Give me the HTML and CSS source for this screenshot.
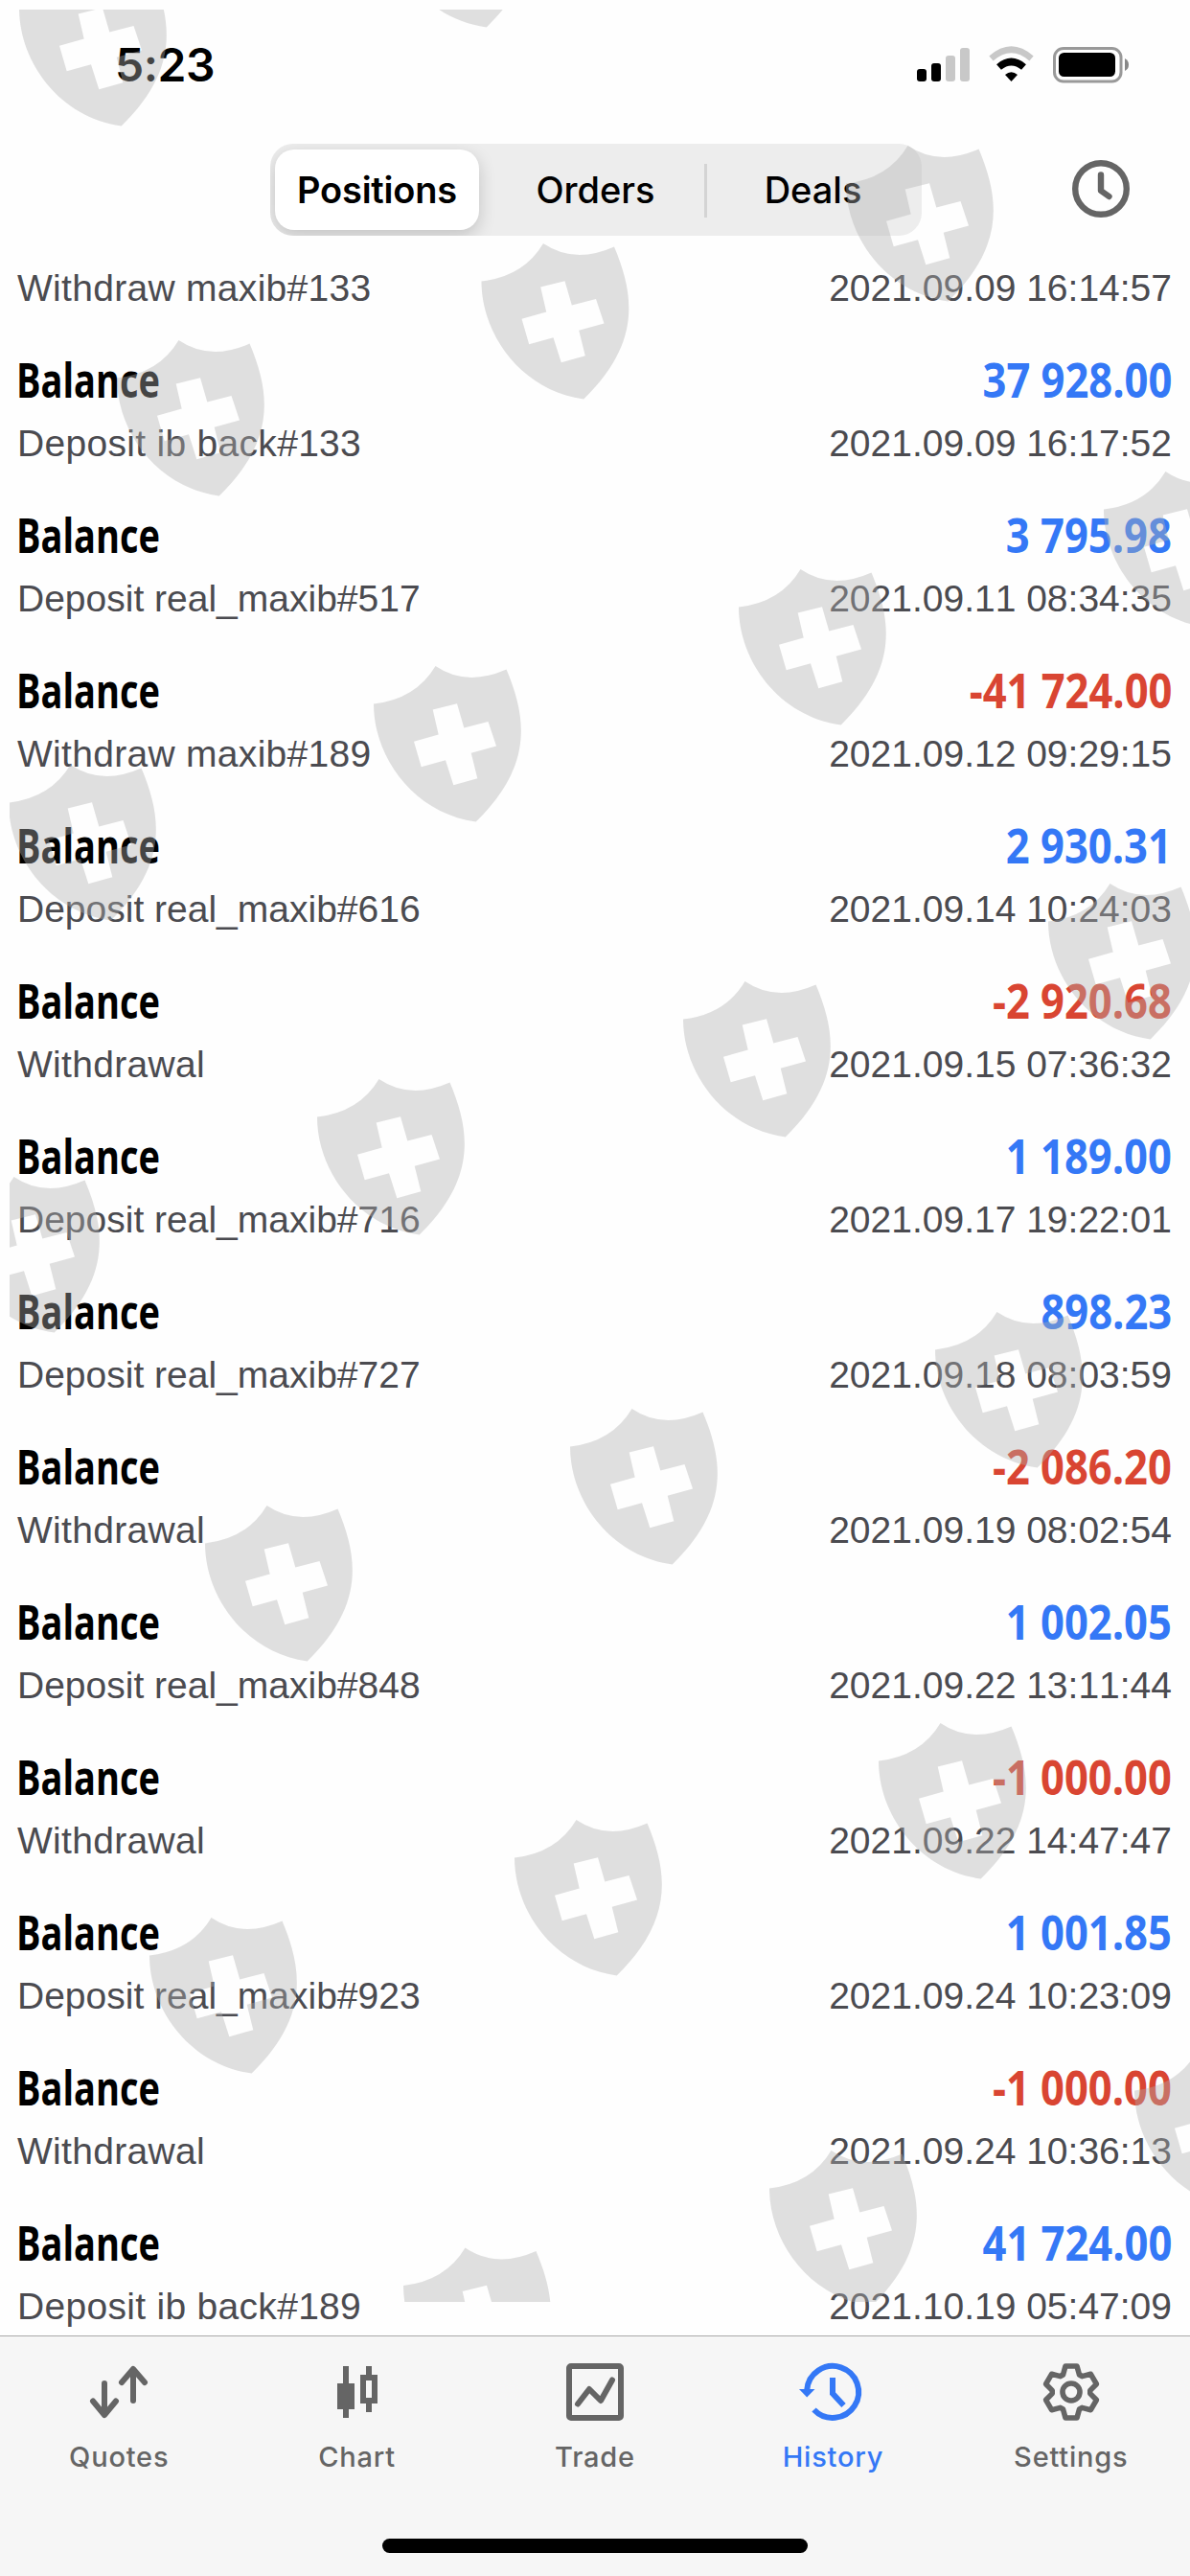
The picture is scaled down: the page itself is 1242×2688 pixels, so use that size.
FILE: index.html
```html
<!DOCTYPE html>
<html lang="en">
<head>
<meta charset="utf-8">
<title>History</title>
<link rel="stylesheet" href="styles.css">
</head>
<body>
<div class="screen">
  <div class="status">
    <span class="time">5:23</span>
    <svg class="status-icons" width="224" height="40" viewBox="956 48 224 40">
      <rect x="957" y="72" width="10" height="13" rx="3"/>
      <rect x="972" y="66" width="10" height="19" rx="3"/>
      <g fill="#c8c8c8"><rect x="987" y="58" width="10" height="27" rx="3"/><rect x="1002" y="50" width="10" height="35" rx="3"/></g>
      <path d="M1034.500 61Q1055.500 42.500 1076.500 61" fill="none" stroke="#c8c8c8" stroke-width="6.500"/>
      <path d="M1042.500 70Q1055.500 59 1068.500 70" fill="none" stroke="#000" stroke-width="7.500"/>
      <path d="M1055.500 85L1049 78Q1055.500 72.500 1062 78Z"/>
      <rect x="1100.500" y="50.500" width="69.500" height="34.500" rx="9.500" fill="none" stroke="#999" stroke-width="3"/>
      <rect x="1105" y="55" width="59" height="25" rx="5.500"/>
      <path d="M1174 61Q1178 63 1178 67.500T1174 74Z" fill="#888"/>
    </svg>
  </div>
  <div class="header">
    <div class="segments">
      <div class="segment active">Positions</div>
      <div class="segment">Orders</div>
      <div class="segment last">Deals</div>
    </div>
    <svg class="clock" width="60" height="60" viewBox="0 0 60 60"><circle cx="30" cy="30" r="26.800"/><path d="M30 15.500V32L38.500 38"/></svg>
  </div>
  <div class="list">
    <div class="row first"><div class="line"><span class="note">Withdraw maxib#133</span><span>2021.09.09 16:14:57</span></div></div>
    <div class="row"><div class="top"><b class="name">Balance</b><b class="sum">37 928.00</b></div><div class="line"><span class="note">Deposit ib back#133</span><span>2021.09.09 16:17:52</span></div></div>
    <div class="row"><div class="top"><b class="name">Balance</b><b class="sum">3 795.98</b></div><div class="line"><span>Deposit real_maxib#517</span><span>2021.09.11 08:34:35</span></div></div>
    <div class="row"><div class="top"><b class="name">Balance</b><b class="sum neg">-41 724.00</b></div><div class="line"><span class="note">Withdraw maxib#189</span><span>2021.09.12 09:29:15</span></div></div>
    <div class="row"><div class="top"><b class="name">Balance</b><b class="sum">2 930.31</b></div><div class="line"><span>Deposit real_maxib#616</span><span>2021.09.14 10:24:03</span></div></div>
    <div class="row"><div class="top"><b class="name">Balance</b><b class="sum neg">-2 920.68</b></div><div class="line"><span class="note">Withdrawal</span><span>2021.09.15 07:36:32</span></div></div>
    <div class="row"><div class="top"><b class="name">Balance</b><b class="sum">1 189.00</b></div><div class="line"><span>Deposit real_maxib#716</span><span>2021.09.17 19:22:01</span></div></div>
    <div class="row"><div class="top"><b class="name">Balance</b><b class="sum">898.23</b></div><div class="line"><span>Deposit real_maxib#727</span><span>2021.09.18 08:03:59</span></div></div>
    <div class="row"><div class="top"><b class="name">Balance</b><b class="sum neg">-2 086.20</b></div><div class="line"><span class="note">Withdrawal</span><span>2021.09.19 08:02:54</span></div></div>
    <div class="row"><div class="top"><b class="name">Balance</b><b class="sum">1 002.05</b></div><div class="line"><span>Deposit real_maxib#848</span><span>2021.09.22 13:11:44</span></div></div>
    <div class="row"><div class="top"><b class="name">Balance</b><b class="sum neg">-1 000.00</b></div><div class="line"><span class="note">Withdrawal</span><span>2021.09.22 14:47:47</span></div></div>
    <div class="row"><div class="top"><b class="name">Balance</b><b class="sum">1 001.85</b></div><div class="line"><span>Deposit real_maxib#923</span><span>2021.09.24 10:23:09</span></div></div>
    <div class="row"><div class="top"><b class="name">Balance</b><b class="sum neg">-1 000.00</b></div><div class="line"><span class="note">Withdrawal</span><span>2021.09.24 10:36:13</span></div></div>
    <div class="row"><div class="top"><b class="name">Balance</b><b class="sum">41 724.00</b></div><div class="line"><span class="note">Deposit ib back#189</span><span>2021.10.19 05:47:09</span></div></div>
  </div>
  <div class="tabs">
    <div class="tab">
      <svg width="68" height="68" viewBox="90 2462 68 68"><g class="stroke round"><path d="M109 2487V2519M97 2505.500L109 2520L121 2505.500M139 2505V2473M127 2486L139 2472L151 2486"/></g></svg>
      <span>Quotes</span>
    </div>
    <div class="tab">
      <svg width="68" height="68" viewBox="339 2462 68 68"><path d="M358 2469h6v18h6v27h-6v9h-6v-9h-6v-27h6zM382 2469h6v9h6v30h-6v9h-6v-9h-6v-30h6zM382 2484v18h6v-18z" fill="#656565" fill-rule="evenodd"/></svg>
      <span>Chart</span>
    </div>
    <div class="tab">
      <svg width="68" height="68" viewBox="586 2462 68 68"><g class="stroke round"><rect x="593" y="2469" width="54" height="54" rx="2"/><path d="M602 2508.500L614 2493L626 2505L638 2483.500"/></g></svg>
      <span>Trade</span>
    </div>
    <div class="tab current">
      <svg width="72" height="68" viewBox="831 2462 72 68"><g class="stroke"><path d="M840.200 2494A27 27 0 1 1 847.500 2514.500M867 2481V2497.500L878.500 2510"/></g><path d="M832 2493H848.500L840.200 2501.500Z" fill="#3478f6"/></svg>
      <span>History</span>
    </div>
    <div class="tab">
      <svg width="68" height="68" viewBox="-34 -34 68 68"><g class="stroke gear"><circle r="9"/><path d="M-8.500-18L-6-27H6L8.500-18L11.300-16.400L20.400-18.700L26.400-8.300L19.800-1.600V1.600L26.400 8.300L20.400 18.700L11.300 16.400L8.500 18L6 27H-6L-8.500 18L-11.300 16.400L-20.400 18.700L-26.400 8.300L-19.800 1.600V-1.600L-26.400-8.300L-20.400-18.700L-11.300-16.400Z"/></g></svg>
      <span>Settings</span>
    </div>
  </div>
  <div class="home"><div class="bar"></div></div>
  <svg class="watermark" viewBox="10 10 1232 2392">
    <defs><path id="shield" fill-rule="evenodd" d="M0 40Q44 35 64.500 .5Q97 22.500 138.500 4C161 57 165 106 106.700 163C42 154 0 96 0 40ZM61.700 46L67.700 72L42 79.300L49.700 105.700L75 98.700L83.300 124.700L108.300 117.700L101.700 91.300L128 84L119.500 58.500L94.300 65L87 39.700Z"/></defs>
    <g fill="#b0b0b0" fill-opacity=".392" transform="translate(1 .5)">
      <use href="#shield" x="19" y="-32"/><use href="#shield" x="400" y="-135"/>
      <use href="#shield" x="121" y="354"/><use href="#shield" x="501.500" y="253"/><use href="#shield" x="882" y="151"/>
      <use href="#shield" x="8" y="797"/><use href="#shield" x="389" y="694"/><use href="#shield" x="770" y="593"/><use href="#shield" x="1151" y="491"/>
      <use href="#shield" x="-51" y="1227"/><use href="#shield" x="330" y="1125"/><use href="#shield" x="712" y="1023"/><use href="#shield" x="1093" y="921"/>
      <use href="#shield" x="213" y="1570"/><use href="#shield" x="594" y="1469"/><use href="#shield" x="975" y="1368"/>
      <use href="#shield" x="155" y="2000"/><use href="#shield" x="536" y="1898"/><use href="#shield" x="916" y="1797"/>
      <use href="#shield" x="420" y="2344.500"/><use href="#shield" x="802" y="2243"/><use href="#shield" x="1183" y="2141"/>
    </g>
  </svg>
</div>
</body>
</html>
```
FILE: styles.css
```css
* { box-sizing: border-box; }
body { margin: 0; background: #fff; font-family: Inter, sans-serif; }
.screen { position: relative; width: 1242px; height: 2688px; overflow: hidden; background: #fefefe; display: flex; flex-direction: column; }
.status { height: 150px; display: flex; justify-content: space-between; align-items: flex-start; padding: 48px 62px 0 120px; }
.time { font-size: 48px; line-height: 40px; font-weight: 600; letter-spacing: -.5px; }
.status-icons { display: block; }
.header { height: 96px; display: flex; justify-content: space-between; align-items: center; padding: 0 63px 0 282px; }
.segments { width: 680px; height: 96px; border-radius: 24px; background: #ededed; display: flex; overflow: hidden; padding: 6px 0 6px 5px; }
.segment { flex: 1; display: flex; align-items: center; justify-content: center; font-size: 38px; font-weight: 500; }
.segment.active { flex: 0 0 213px; margin-right: 8px; background: #fff; border-radius: 20px; font-weight: 600; font-size: 38px; letter-spacing: -.2px; box-shadow: 0 6px 18px rgba(0,0,0,.18); }
.segment.last { position: relative; }
.segment.last::before { content: ""; position: absolute; left: 0; top: 15px; width: 3px; height: 56px; background: #d4d4d4; }
.clock { fill: none; stroke: #656565; stroke-width: 6.400; stroke-linecap: round; stroke-linejoin: round; margin-top: -2px; }
.list { height: 2191px; padding: 0 19px 0 18px; }
.row { height: 162px; display: flex; flex-direction: column; }
.row.first { height: 99px; padding-top: 32px; }
.top { height: 81px; display: flex; justify-content: space-between; align-items: flex-end; }
.name, .sum { font: 700 50px/60px "Open Sans", sans-serif; white-space: pre; }
.name { transform: scaleX(.76); transform-origin: 0 50%; margin-left: -1px; }
.sum { color: #3478f6; transform: scaleX(.87); transform-origin: 100% 50%; }
.sum.neg { color: #d94532; }
.line { display: flex; justify-content: space-between; font: 39px/46px "Liberation Sans", Arial, sans-serif; font-kerning: none; color: #4b4b50; margin-top: 14px; }
.note { letter-spacing: .3px; }
.row.first .line { margin-top: 0; }
.tabs { height: 164px; background: #f6f6f6; border-top: 1px solid #a9a9a9; display: flex; padding-top: 24px; }
.tab { flex: 1; display: flex; flex-direction: column; align-items: center; color: #656565; font-size: 29px; line-height: 36px; font-weight: 500; letter-spacing: .8px; }
.tab span { margin-top: 16px; }
.tab.current { color: #3478f6; }
.stroke { fill: none; stroke: currentColor; stroke-width: 6; }
.round { stroke-linecap: round; stroke-linejoin: round; }
.gear { stroke-width: 5.600; stroke-linejoin: round; }
.home { flex: 1; background: #f6f6f6; display: flex; justify-content: center; align-items: flex-end; padding-bottom: 24px; }
.bar { width: 444px; height: 15px; border-radius: 8px; background: #000; }
.watermark { position: absolute; left: 10px; top: 10px; width: 1232px; height: 2392px; overflow: hidden; pointer-events: none; }
```
